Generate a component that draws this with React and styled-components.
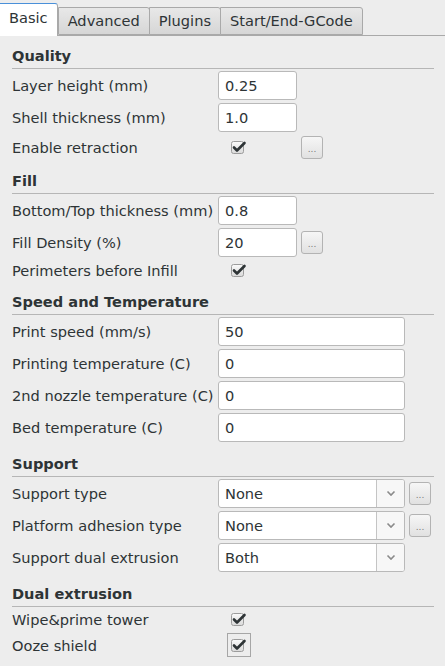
import React from 'react'
import styled, { createGlobalStyle } from 'styled-components'

const GlobalStyle = createGlobalStyle`
  body {
    margin: 0;
    background: #ededed;
    font-family: "DejaVu Sans", "Liberation Sans", sans-serif;
    font-size: 14.6px;
    color: #2e3436;
  }
`

// tabs
const TabBar = styled.div`
  display: flex;
  align-items: flex-end;
  height: 35px;
  border-bottom: 1px solid #a9a9a9;
`

const Tab = styled.div`
  box-sizing: border-box;
  height: ${({ active }) => active ? '33px' : '28px'};
  margin-bottom: ${({ active }) => active ? '-1px' : '0'};
  padding: ${({ active }) => active ? '4px 9px 0 9px' : '3px 9px 0'};
  line-height: 20px;
  background: ${({ active }) => active ? '#ffffff' : 'linear-gradient(#e8e8e8, #d6d6d6)'};
  border: 1px solid #a9a9a9;
  border-left: ${({ first }) => first ? 'none' : '1px solid #a9a9a9'};
  border-top: ${({ active }) => active ? '1px solid #4a90d9' : '1px solid #a9a9a9'};
  border-bottom: ${({ active }) => active ? 'none' : '1px solid #a9a9a9'};
  border-radius: 0 3px 0 0;
  margin-right: ${({ active }) => active ? '0' : '-1px'};
  white-space: nowrap;
`

// panel
const Panel = styled.div`
  padding: 0 11px 0 12px;
`

const Header = styled.div`
  box-sizing: border-box;
  height: ${({ h }) => h || 33}px;
  display: flex;
  align-items: flex-end;
  padding-bottom: 4px;
  line-height: 17px;
  font-weight: bold;
  border-bottom: 1px solid #b6b6b6;
`

const Row = styled.div`
  display: flex;
  align-items: center;
  height: ${({ h }) => h || 32}px;
`

const Label = styled.div`
  width: 206px;
  flex: none;
  white-space: nowrap;
`

const Input = styled.div`
  box-sizing: border-box;
  flex: none;
  width: ${({ wide }) => wide ? '187px' : '79px'};
  height: 29px;
  padding: 0 6px;
  display: flex;
  align-items: center;
  background: #fff;
  border: 1px solid #b9b9b9;
  border-radius: 3px;
`

const SelectBox = styled.div`
  box-sizing: border-box;
  flex: none;
  width: 187px;
  height: 29px;
  display: flex;
  background: #fff;
  border: 1px solid #b9b9b9;
  border-radius: 3px;
  overflow: hidden;
`

const SelectText = styled.div`
  flex: 1;
  display: flex;
  align-items: center;
  padding: 0 6px;
`

const SelectArrow = styled.div`
  width: 27px;
  display: flex;
  align-items: center;
  justify-content: center;
  border-left: 1px solid #c4c4c4;
  background: #f7f7f7;
`

const DotsButton = styled.div`
  box-sizing: border-box;
  flex: none;
  width: 22px;
  height: 23px;
  margin-left: 4px;
  border: 1px solid #b3b3b3;
  border-radius: 3px;
  background: linear-gradient(#f6f6f6, #e1e1e1);
  color: #7a7a7a;
  font-size: 9px;
  display: flex;
  align-items: center;
  justify-content: center;
  padding-top: 3px;
`

// checkbox sits in the same column as the small inputs
const CheckCell = styled.div`
  width: 79px;
  flex: none;
  display: flex;
  align-items: center;
`

const CheckWrap = styled.div`
  box-sizing: border-box;
  width: 24px;
  height: 24px;
  margin-left: 9px;
  display: flex;
  align-items: center;
  justify-content: center;
  border: 1px solid ${({ focused }) => focused ? '#a6a6a6' : 'transparent'};
`

const Check = () => (
  <svg width="16" height="14" viewBox="0 0 16 14">
    <defs>
      <linearGradient id="cbg" x1="0" y1="0" x2="0" y2="1">
        <stop offset="0" stopColor="#fbfbfb" />
        <stop offset="1" stopColor="#d9d9d9" />
      </linearGradient>
    </defs>
    <rect x="0.5" y="1.5" width="12" height="12" rx="2" fill="url(#cbg)" stroke="#9c9c9c" />
    <path d="M3 7.5 L6 10.5 L13.5 3" fill="none" stroke="#2e3436" strokeWidth="2.6" strokeLinecap="round" strokeLinejoin="round" />
  </svg>
)

const Chevron = () => (
  <svg width="10" height="7" viewBox="0 0 10 7">
    <path d="M1.5 1.5 L5 5 L8.5 1.5" fill="none" stroke="#8a8a8a" strokeWidth="1.6" />
  </svg>
)

const Select = ({ value }) => (
  <SelectBox>
    <SelectText>{value}</SelectText>
    <SelectArrow><Chevron /></SelectArrow>
  </SelectBox>
)

const Checkbox = ({ focused }) => (
  <CheckCell>
    <CheckWrap focused={focused}><Check /></CheckWrap>
  </CheckCell>
)

const Dots = () => <DotsButton>...</DotsButton>

const tabs = ['Basic', 'Advanced', 'Plugins', 'Start/End-GCode']

export default function App() {
  return (
    <>
      <GlobalStyle />
      <TabBar>
        {tabs.map((t, i) => (
          <Tab key={t} active={i === 0} first={i === 0}>{t}</Tab>
        ))}
      </TabBar>

      <Panel>
        {/* quality */}
        <Header h={33}>Quality</Header>
        <Row><Label>Layer height (mm)</Label><Input>0.25</Input></Row>
        <Row><Label>Shell thickness (mm)</Label><Input>1.0</Input></Row>
        <Row h={28}><Label>Enable retraction</Label><Checkbox /><Dots /></Row>

        {/* fill */}
        <Header h={33}>Fill</Header>
        <Row><Label>Bottom/Top thickness (mm)</Label><Input>0.8</Input></Row>
        <Row><Label>Fill Density (%)</Label><Input>20</Input><Dots /></Row>
        <Row h={24}><Label>Perimeters before Infill</Label><Checkbox /></Row>

        {/* speed */}
        <Header h={33}>Speed and Temperature</Header>
        <Row><Label>Print speed (mm/s)</Label><Input wide>50</Input></Row>
        <Row><Label>Printing temperature (C)</Label><Input wide>0</Input></Row>
        <Row><Label>2nd nozzle temperature (C)</Label><Input wide>0</Input></Row>
        <Row><Label>Bed temperature (C)</Label><Input wide>0</Input></Row>

        {/* support */}
        <Header h={34}>Support</Header>
        <Row><Label>Support type</Label><Select value="None" /><Dots /></Row>
        <Row><Label>Platform adhesion type</Label><Select value="None" /><Dots /></Row>
        <Row><Label>Support dual extrusion</Label><Select value="Both" /></Row>

        {/* dual extrusion */}
        <Header h={34}>Dual extrusion</Header>
        <Row h={24}><Label>Wipe&amp;prime tower</Label><Checkbox /></Row>
        <Row h={28}><Label>Ooze shield</Label><Checkbox focused /></Row>
      </Panel>
    </>
  )
}
